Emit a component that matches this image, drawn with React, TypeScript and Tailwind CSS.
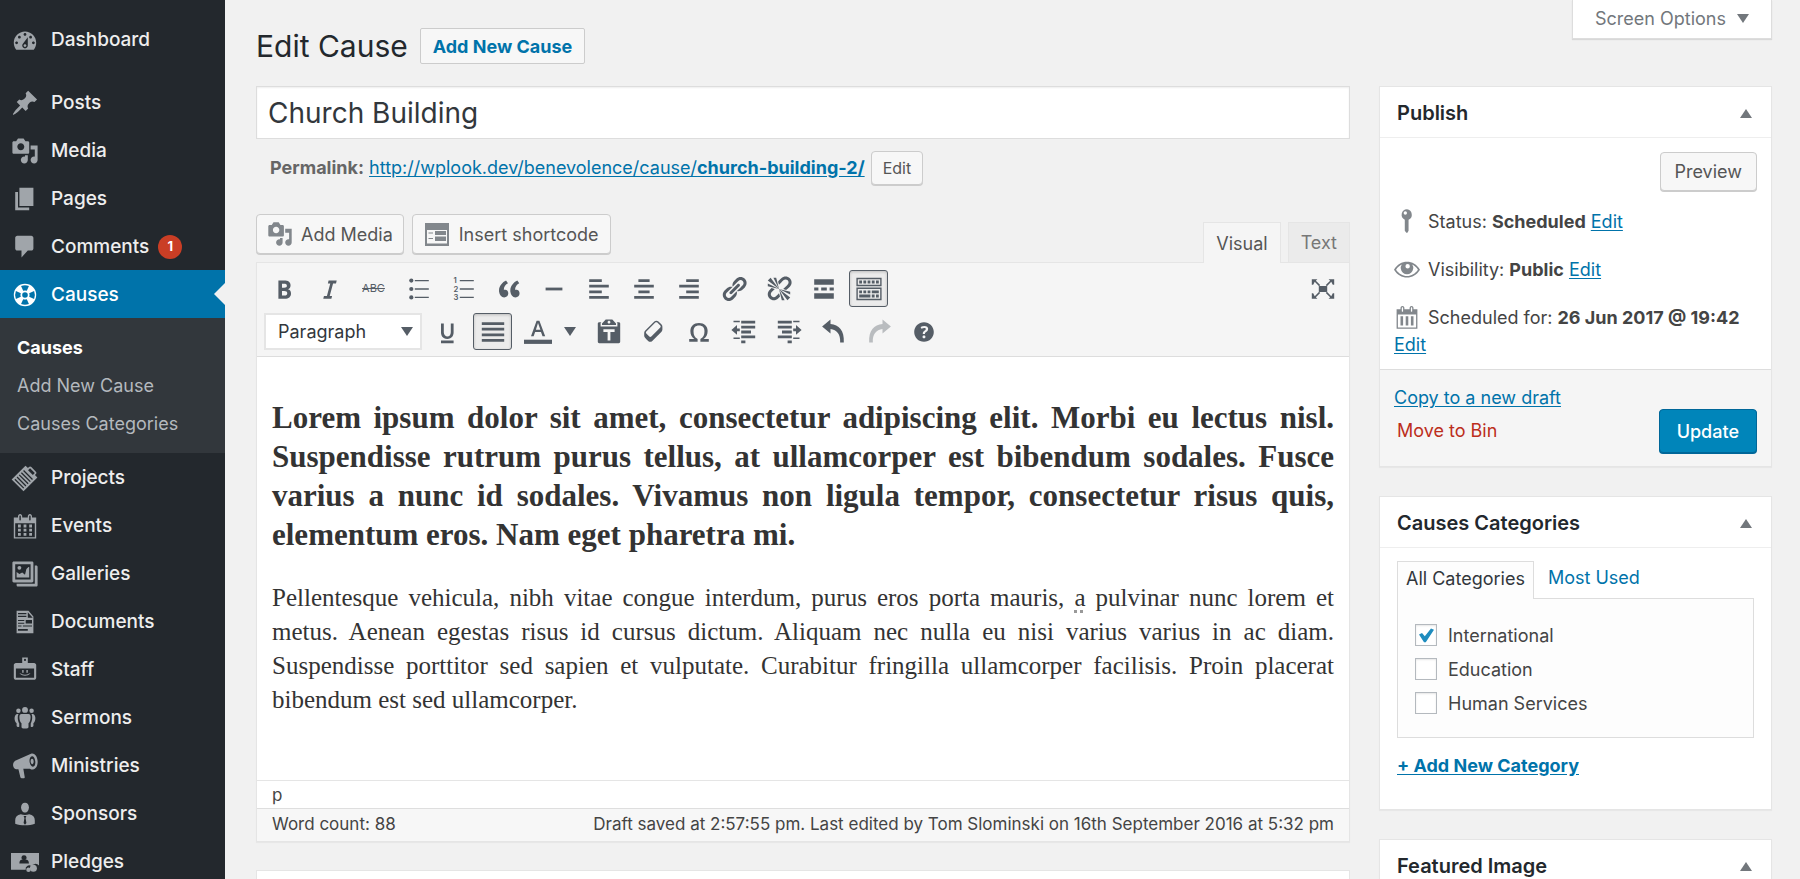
import React, { useState } from 'react';

type IconProps = { size?: string; children?: React.ReactNode; d?: string };

function Icon({ size = 'size-7', d, children }: IconProps) {
  return (
    <svg viewBox="0 0 20 20" className={`${size} shrink-0`} fill="currentColor" fillRule="evenodd" aria-hidden="true">
      {d ? <path d={d} /> : children}
    </svg>
  );
}

const MEDIA =
  'M13 11V4c0-.55-.45-1-1-1h-1.67L9 1H5L3.67 3H2c-.55 0-1 .45-1 1v7c0 .55.45 1 1 1h10c.55 0 1-.45 1-1zM7 4.5c1.38 0 2.5 1.12 2.5 2.5S8.38 9.5 7 9.5 4.5 8.38 4.5 7 5.62 4.5 7 4.5zM14 6h5v10.5c0 1.38-1.12 2.5-2.5 2.5S14 17.88 14 16.5s1.12-2.5 2.5-2.5c.17 0 .34.02.5.05V9h-3V6zm-4 8.05V13h2v3.5c0 1.38-1.12 2.5-2.5 2.5S7 17.88 7 16.5 8.12 14 9.5 14c.17 0 .34.02.5.05z';

const CAL_FRAME =
  'M15 4h3v15H2V4h3V3c0-.41.15-.76.44-1.06.29-.29.65-.44 1.06-.44s.77.15 1.06.44c.29.3.44.65.44 1.06v1h4V3c0-.41.15-.76.44-1.06.29-.29.65-.44 1.06-.44s.77.15 1.06.44c.29.3.44.65.44 1.06v1zM6 3v2.5c0 .14.05.26.15.36.09.09.21.14.35.14s.26-.05.35-.14c.1-.1.15-.22.15-.36V3c0-.14-.05-.26-.15-.35-.09-.1-.21-.15-.35-.15s-.26.05-.35.15c-.1.09-.15.21-.15.35zm7 0v2.5c0 .14.05.26.14.36.1.09.22.14.36.14s.26-.05.36-.14c.09-.1.14-.22.14-.36V3c0-.14-.05-.26-.14-.35-.1-.1-.22-.15-.36-.15s-.26.05-.36.15c-.09.09-.14.21-.14.35zm4 15V8H3v10h14z';

const icons = {
  dashboard: (
    <Icon d="M3.76 17h12.48c1.1-1.37 1.76-3.11 1.76-5 0-4.42-3.58-8-8-8s-8 3.58-8 8c0 1.89.66 3.63 1.76 5zM10 5c.55 0 1 .45 1 1s-.45 1-1 1-1-.45-1-1 .45-1 1-1zM6 7c.55 0 1 .45 1 1s-.45 1-1 1-1-.45-1-1 .45-1 1-1zm8 0c.55 0 1 .45 1 1s-.45 1-1 1-1-.45-1-1 .45-1 1-1zm-5.37 5.55L12 8v6c0 1.1-.9 2-2 2s-2-.9-2-2c0-.57.24-1.08.63-1.45zM4 11c.55 0 1 .45 1 1s-.45 1-1 1-1-.45-1-1 .45-1 1-1zm12 0c.55 0 1 .45 1 1s-.45 1-1 1-1-.45-1-1 .45-1 1-1zm-5 3c0-.55-.45-1-1-1s-1 .45-1 1 .45 1 1 1 1-.45 1-1z" />
  ),
  posts: (
    <Icon d="M10.44 3.02l1.82-1.82 6.36 6.35-1.83 1.82c-1.05-.68-2.48-.57-3.41.36l-.75.75c-.92.93-1.04 2.35-.35 3.41l-1.83 1.82-2.41-2.41-2.8 2.79c-.42.42-3.38 2.71-3.8 2.29s1.86-3.39 2.28-3.81l2.79-2.79L4.1 9.36l1.83-1.82c1.05.69 2.48.57 3.4-.36l.75-.75c.93-.92 1.05-2.35.36-3.41z" />
  ),
  media: <Icon d={MEDIA} />,
  pages: <Icon d="M6 15V2h10v13H6zm-1 1h8v2H3V5h2v11z" />,
  comments: <Icon d="M4.5 2h10c.8 0 1.500.7 1.500 1.500v7.500c0 .8-.7 1.500-1.500 1.500h-2.500l-4.500 5v-5H4.500c-.8 0-1.500-.7-1.500-1.500V3.500C3 2.700 3.700 2 4.500 2z" />,
  causes: (
    <Icon d="M10 2a8 8 0 1 0 0 16a8 8 0 1 0 0-16zM10 8a2 2 0 1 1 0 4a2 2 0 1 1 0-4zM7.200 3.500L8.700 7Q10 6.400 11.300 7L12.800 3.500Q10 2.400 7.200 3.500zM7.200 16.500L8.700 13Q10 13.600 11.300 13L12.800 16.500Q10 17.600 7.200 16.500zM3.500 7.200L7 8.700Q6.400 10 7 11.300L3.500 12.800Q2.400 10 3.500 7.200zM16.500 7.200L13 8.700Q13.600 10 13 11.300L16.500 12.800Q17.600 10 16.500 7.200z" />
  ),
  projects: (
    <Icon>
      <g transform="rotate(45 10 10)">
        <path d="M4 3.500h2.500V2.500c0-.8.500-1.200 1.200-1.200h4.600c.7 0 1.200.4 1.200 1.200v1H16v14H4zM7.600 2.500v2h4.800v-2zM5.500 6.500v.9h9v-.9zm0 2.200v.9h9v-.9zm0 2.200v.9h9v-.9zm0 2.200v.9h9v-.9zm0 2.200v.9h9v-.9z" />
      </g>
    </Icon>
  ),
  events: (
    <Icon d={CAL_FRAME + 'M5 9h2v2H5zM9 9h2v2H9zM13 9h2v2h-2zM5 12h2v2H5zM9 12h2v2H9zM13 12h2v2h-2zM5 15h2v2H5zM9 15h2v2H9zM13 15h2v2h-2z'} />
  ),
  galleries: (
    <Icon d="M2 1h13c.6 0 1 .4 1 1v13c0 .6-.4 1-1 1H2c-.6 0-1-.4-1-1V2c0-.6.4-1 1-1zm1 2v11h11V3zM6 4.200a1.400 1.400 0 1 1 0 2.800a1.400 1.400 0 1 1 0-2.800zM4 12.500V8.500l2 1.500 2-1 2 1.500 1-4 1.500-1.500.5 0v7.500zM17 4h1c.6 0 1 .4 1 1v13c0 .6-.4 1-1 1H5c-.6 0-1-.4-1-1v-1h13z" />
  ),
  documents: (
    <Icon d="M4 2h8.500L16 6v12H4zM5 3.600v.8h6v-.8zm0 2v.8h6v-.8zM12 3v4h3.500zM5 8.500v.8h4.500v-.8zm5.500 0v2.500H15V8.500zM5 10.500v.8h4.500v-.8zM5 12.500v.8h2.500v-.8zm3.500 0v.8H15v-.8zM5 15v1.200h7V15z" />
  ),
  staff: (
    <Icon d="M8 1h4v4h4.500c.8 0 1.500.7 1.500 1.500v9c0 .8-.7 1.500-1.500 1.500h-13C2.700 17 2 16.300 2 15.500v-9C2 5.700 2.700 5 3.500 5H8zM10 2a.8.8 0 1 0 0 1.600a.8.8 0 1 0 0-1.600zM3.500 9v6.500h13V9zM8 10h1v2H8zm3 0h1v2h-1zM6 12.500h1Q10 14.300 13 12.500h1Q10 15.800 6 12.500z" />
  ),
  sermons: (
    <Icon>
      <circle cx="10" cy="4.200" r="2.100" />
      <circle cx="5.300" cy="4.900" r="1.600" />
      <circle cx="14.700" cy="4.900" r="1.600" />
      <path d="M7.500 7.200h5c1 0 1.500.8 1.500 2 0 2-.5 3.600-1.500 4.600v2.600c0 .7-.8 1.100-2.500 1.100s-2.500-.4-2.500-1.100v-2.600C6.500 12.800 6 11.200 6 9.200c0-1.200.5-2 1.500-2z" />
      <path d="M4.300 7.200h1.100C4.600 8.500 4.600 11.500 5.900 14v2.200c-1 .6-1.600.2-1.900-.4v-2C2 12 2.100 8 4.300 7.200zM15.700 7.200h-1.100c.8 1.300.8 4.300-.5 6.800v2.200c1 .6 1.600.2 1.900-.4v-2c2-1.800 1.900-5.800-.3-6.600z" />
    </Icon>
  ),
  ministries: (
    <Icon d="M14.300 1.300c2.200-.8 4.400 1.500 4.700 5 .3 3.400-1.300 6-3.300 6.200-.8.100-1.500-.1-2.200-.6L8.800 12l1 5.800c.1.700-.2 1-.8 1H7.700c-.5 0-.8-.3-1-.8L5.300 12.300c-1.700.2-3.200-.3-3.700-2.200-.5-2.100.6-3.600 2.200-4.200zM15 3c-1.400.2-2 2-1.700 4.200.3 2 1.300 3.400 2.400 3.300 1.300-.2 1.900-2 1.600-4.100C17 4.300 16.100 2.900 15 3zM15 4.800c.8 0 1.200 1 1.200 2s-.4 1.900-1 1.900-1.100-.9-1.200-1.900c0-1.100.3-2 1-2z" />
  ),
  sponsors: (
    <Icon>
      <path d="M10 2c1.700 0 2.800 1.300 2.800 3.200C12.800 7.300 11.600 9 10 9S7.200 7.300 7.200 5.200C7.200 3.300 8.300 2 10 2z" />
      <path d="M7 10.200c1 .3 2 .5 3 .5s2-.2 3-.5c2.600.4 4 2 4 4.300v2.400c-2 .8-4.500 1.200-7 1.200s-5-.4-7-1.200v-2.400c0-2.300 1.400-3.900 4-4.300zM9 11.500l.6 1.300L9 16.500l1 1.200 1-1.200-.6-3.700.6-1.300z" />
    </Icon>
  ),
  pledges: (
    <Icon size="w-7 h-7 overflow-visible">
      <path d="M0 3.500h20v9a3.400 3.400 0 0 0-5.500.5a2.500 2.500 0 0 0-4 2.500H0zM9.300 5.300a1.600 1.600 0 0 0-1 3c-1.600.2-2.300 1-2.300 2.700h6.800c0-1.700-.8-2.500-2.500-2.700a1.600 1.600 0 0 0-1-3z" />
      <circle cx="16" cy="14.500" r="2.500" />
      <circle cx="12.500" cy="15.500" r="1.600" />
    </Icon>
  ),
};

const menuTop = [
  { label: 'Posts', icon: icons.posts },
  { label: 'Media', icon: icons.media },
  { label: 'Pages', icon: icons.pages },
  { label: 'Comments', icon: icons.comments, badge: '1' },
];

const menuBottom = [
  { label: 'Projects', icon: icons.projects },
  { label: 'Events', icon: icons.events },
  { label: 'Galleries', icon: icons.galleries },
  { label: 'Documents', icon: icons.documents },
  { label: 'Staff', icon: icons.staff },
  { label: 'Sermons', icon: icons.sermons },
  { label: 'Ministries', icon: icons.ministries },
  { label: 'Sponsors', icon: icons.sponsors },
  { label: 'Pledges', icon: icons.pledges },
];

function MenuItem({ label, icon, badge }: { label: string; icon: React.ReactNode; badge?: string }) {
  return (
    <li>
      <a href="#" className="flex h-12 items-center gap-3 pt-0.5 pl-[11px] text-[19px] font-medium text-[#eeeeee]">
        <span className="text-[#a0a5aa]">{icon}</span>
        <span className="flex items-center gap-[9px]">
          {label}
          {badge && (
            <span className="flex size-6 items-center justify-center rounded-full bg-[#ca3e25] text-[13px] font-bold text-white">{badge}</span>
          )}
        </span>
      </a>
    </li>
  );
}

function Sidebar() {
  return (
    <nav className="w-[225px] shrink-0 bg-[#23282d] pt-[15px]" aria-label="Main menu">
      <ul>
        <MenuItem label="Dashboard" icon={icons.dashboard} />
      </ul>
      <ul className="mt-[15px]">
        {menuTop.map((m) => (
          <MenuItem key={m.label} {...m} />
        ))}
        <li>
          <a href="#" className="relative flex h-12 items-center gap-3 bg-[#0073aa] pt-0.5 pl-[11px] text-[19px] font-medium text-white">
            {icons.causes}
            Causes
            <span className="absolute top-1/2 right-0 -mt-[11px] border-y-[11px] border-r-[11px] border-y-transparent border-r-[#f1f1f1]" />
          </a>
          <ul className="bg-[#32373c] px-[17px] pt-[10px] pb-[11px] text-[18px]">
            <li><a href="#" className="flex h-[38px] items-center font-bold text-white">Causes</a></li>
            <li><a href="#" className="flex h-[38px] items-center text-[#b4b9be]">Add New Cause</a></li>
            <li><a href="#" className="flex h-[38px] items-center text-[#b4b9be]">Causes Categories</a></li>
          </ul>
        </li>
        {menuBottom.map((m) => (
          <MenuItem key={m.label} {...m} />
        ))}
      </ul>
    </nav>
  );
}

function ToolButton({ label, active, faded, children }: { label: string; active?: boolean; faded?: boolean; children: React.ReactNode }) {
  return (
    <button
      type="button"
      aria-label={label}
      className={`flex h-[37px] w-[39px] shrink-0 items-center justify-center rounded-[3px] border ${
        active ? 'border-[#555d66] bg-[#ebebeb] shadow-[inset_0_1px_3px_rgba(0,0,0,0.2)]' : 'border-transparent'
      } ${faded ? 'text-[#b9bcbf]' : 'text-[#555d66]'}`}
    >
      {children}
    </button>
  );
}

const INDENT_LINES = 'M8 2h10v2H8zM8 5.500h10v2H8zM8 9h7v2H8zM8 12.500h10v2H8zM8 16h3v2H8zM2.500 2H7v1H2.500zM2.500 14H7v1H2.500z';

function Toolbar() {
  return (
    <div className="border-b border-[#dddddd] bg-[#f5f5f5] px-[7px] pt-[7px] pb-[6px]">
      <div className="flex items-center justify-between">
        <div className="flex gap-[6px]">
          <ToolButton label="Bold">
            <Icon d="M6 4v13h4.540c1.370 0 2.460-.33 3.260-1 .8-.66 1.200-1.580 1.200-2.770 0-.84-.17-1.510-.51-2.010s-.9-.85-1.670-1.030v-.09c.57-.1 1.020-.4 1.360-.9s.51-1.130.51-1.910c0-1.140-.39-1.980-1.170-2.500C12.750 4.260 11.500 4 9.780 4H6zm2.570 5.150V6.260h1.360c.73 0 1.270.11 1.610.32.34.22.51.58.51 1.070 0 .54-.16.92-.47 1.150s-.82.35-1.510.35h-1.500zm0 2.190h1.600c1.440 0 2.160.53 2.160 1.610 0 .6-.17 1.050-.51 1.340s-.86.43-1.570.43H8.570v-3.380z" />
          </ToolButton>
          <ToolButton label="Italic"><Icon d="M15.500 4h-5.800l-.5 2h1.700l-2.400 9H6.400L5.900 17h5.800l.5-2h-1.700l2.400-9H15z" /></ToolButton>
          <ToolButton label="Strikethrough"><span className="text-[11px] line-through">ABC</span></ToolButton>
          <ToolButton label="Bulleted list">
            <Icon>
              <circle cx="4.500" cy="4" r="1.500" /><circle cx="4.500" cy="10" r="1.500" /><circle cx="4.500" cy="16" r="1.500" />
              <path d="M7 3.500h10v1H7zM7 9.500h10v1H7zM7 15.500h10v1H7z" />
            </Icon>
          </ToolButton>
          <ToolButton label="Numbered list">
            <Icon>
              <text x="2.500" y="6" fontSize="5.500" fontWeight="600">1</text>
              <text x="2.500" y="12" fontSize="5.500" fontWeight="600">2</text>
              <text x="2.500" y="18" fontSize="5.500" fontWeight="600">3</text>
              <path d="M7 3.500h10v1H7zM7 9.500h10v1H7zM7 15.500h10v1H7z" />
            </Icon>
          </ToolButton>
          <ToolButton label="Blockquote">
            <Icon d="M9.490 13.220c0-.74-.2-1.380-.61-1.900-.62-.78-1.830-.88-2.530-.72-.29-1.650 1.110-3.750 2.920-4.650L7.880 4c-2.730 1.300-5.420 4.280-4.960 8.050C3.210 14.430 4.590 16 6.540 16c.85 0 1.560-.25 2.120-.75s.83-1.180.83-2.030zm8.050 0c0-.74-.2-1.380-.61-1.900-.63-.78-1.830-.88-2.530-.72-.29-1.650 1.110-3.750 2.920-4.650L15.930 4c-2.730 1.300-5.410 4.280-4.950 8.050.29 2.380 1.660 3.950 3.610 3.950.85 0 1.560-.25 2.120-.75s.83-1.180.83-2.030z" />
          </ToolButton>
          <ToolButton label="Horizontal line"><Icon d="M4 9h12v2H4z" /></ToolButton>
          <ToolButton label="Align left"><Icon d="M12 5V3H3v2h9zm5 4V7H3v2h14zm-5 4v-2H3v2h9zm5 4v-2H3v2h14z" /></ToolButton>
          <ToolButton label="Align center"><Icon d="M14 5V3H6v2h8zm3 4V7H3v2h14zm-3 4v-2H6v2h8zm3 4v-2H3v2h14z" /></ToolButton>
          <ToolButton label="Align right"><Icon d="M17 5V3H8v2h9zm0 4V7H3v2h14zm0 4v-2H8v2h9zm0 4v-2H3v2h14z" /></ToolButton>
          <ToolButton label="Insert link">
            <Icon d="M17.740 2.760c1.680 1.690 1.680 4.410 0 6.100l-1.530 1.520c-1.120 1.120-2.700 1.470-4.140 1.090l2.620-2.610.76-.77.76-.76c.84-.84.84-2.200 0-3.040-.84-.85-2.200-.85-3.040 0l-.77.76-3.380 3.380c-.37-1.440-.02-3.020 1.100-4.140l1.520-1.530c1.690-1.680 4.420-1.680 6.100 0zM8.590 13.430l5.340-5.340c.42-.42.42-1.100 0-1.520-.44-.43-1.130-.39-1.530 0l-5.330 5.340c-.42.42-.42 1.100 0 1.520.44.43 1.130.39 1.520 0zm-.76 2.290l4.140-4.150c.38 1.440.03 3.020-1.090 4.140l-1.520 1.530c-1.690 1.680-4.410 1.680-6.100 0-1.680-1.680-1.680-4.420 0-6.100l1.530-1.520c1.120-1.120 2.700-1.470 4.140-1.100l-4.140 4.150c-.85.84-.85 2.200 0 3.050.84.84 2.200.84 3.040 0z" />
          </ToolButton>
          <ToolButton label="Remove link">
            <Icon d="M17.740 2.260c1.680 1.690 1.680 4.410 0 6.100l-1.530 1.520c-.32.33-.69.58-1.080.77L13 10l1.690-1.640.76-.77.76-.76c.84-.84.84-2.200 0-3.040-.84-.85-2.200-.85-3.040 0l-.77.76-.76.76L10 7l-.65-2.140c.19-.38.44-.75.77-1.070l1.520-1.530c1.690-1.680 4.420-1.680 6.100 0zM2 4l8 6-6-8zm4-2l4 8-2-8H6zM2 6l8 4-8-2V6zm7.360 7.690L10 13l.74 2.350-1.380 1.390c-1.690 1.680-4.410 1.680-6.100 0-1.680-1.680-1.680-4.420 0-6.100l1.390-1.380L7 10l-.69.64-1.520 1.530c-.85.84-.85 2.200 0 3.040.84.85 2.200.85 3.040 0zM18 16l-8-6 6 8zm-4 2l-4-8 2 8h2zm4-4l-8-4 8 2v2z" />
          </ToolButton>
          <ToolButton label="Read more tag"><Icon d="M17 7V3H3v4h14zM6 11V9H3v2h3zm6 0V9H8v2h4zm5 0V9h-3v2h3zm0 6v-4H3v4h14z" /></ToolButton>
          <ToolButton label="Toolbar toggle" active>
            <Icon d="M19 2v6H1V2h18zm-1 5V3H2v4h16zM5 4v2H3V4h2zm3 0v2H6V4h2zm3 0v2H9V4h2zm3 0v2h-2V4h2zm3 0v2h-2V4h2zm2 5v9H1V9h18zm-1 8v-7H2v7h16zM5 11v2H3v-2h2zm3 0v2H6v-2h2zm3 0v2H9v-2h2zm6 0v2h-5v-2h5zm-6 3v2H3v-2h8zm3 0v2h-2v-2h2zm3 0v2h-2v-2h2z" />
          </ToolButton>
        </div>
        <ToolButton label="Distraction-free writing mode">
          <Icon>
            <path d="M7 7.800h6v4.400H7zM2 3h4L4.900 4.100 8 7.200 7.200 8 4.100 4.900 3 7 2 7zM18 3h-4l1.100 1.100L12 7.200l.8.8 3.100-3.100L17 7h1zM2 17h4l-1.100-1.100L8 12.800 7.200 12l-3.100 3.100L3 13H2zM18 17h-4l1.100-1.100L12 12.800l.8-.8 3.100 3.100L17 13h1z" />
          </Icon>
        </ToolButton>
      </div>
      <div className="mt-[6px] flex items-center gap-[6px]">
        <button type="button" className="flex h-[37px] w-[158px] shrink-0 items-center justify-between border-2 border-[#e5e5e5] bg-white pr-[7px] pl-[12px] text-[18px] text-[#32373c]">
          Paragraph
          <svg viewBox="0 0 12 9" className="h-[9px] w-3" fill="#555d66"><path d="M0 0h12L6 9z" /></svg>
        </button>
        <ToolButton label="Underline">
          <Icon d="M14 4h-2v6.200c0 1.990-1.120 2.980-2.450 2.980-1.320 0-2.550-1-2.550-2.960V4H5v6.400c0 1.910 1 4.540 4.480 4.540 3.490 0 4.520-2.580 4.520-4.500V4zM14 18v-2H5v2z" />
        </ToolButton>
        <ToolButton label="Justify" active><Icon d="M2 3h16v2H2V3zm0 4h16v2H2V7zm0 4h16v2H2v-2zm0 4h16v2H2v-2z" /></ToolButton>
        <div className="flex">
          <ToolButton label="Text color">
            <Icon>
              <path d="M13.230 13h1.900L11 2H9L5 13h1.880l1.070-3h4.180zm-1.530-4.540H8.510L10 3.600z" />
              <path d="M0 15.500h20v3H0z" />
            </Icon>
          </ToolButton>
          <button type="button" aria-label="Text color options" className="flex w-[26px] items-center justify-center">
            <svg viewBox="0 0 12 9" className="h-[9px] w-3" fill="#555d66"><path d="M0 0h12L6 9z" /></svg>
          </button>
        </div>
        <ToolButton label="Paste as text">
          <Icon d="M12.380 1L15 4v1H5V4l2.640-3h4.740zM10 4c.55 0 1-.44 1-1 0-.55-.45-1-1-1s-1 .45-1 1c0 .56.45 1 1 1zm5.450-1H17c.55 0 1 .45 1 1v13c0 .56-.45 1-1 1H3c-.55 0-1-.44-1-1V4c0-.55.45-1 1-1h1.550L4 3.630V6h12V3.630zM14 10V8H6v2h3v6h2v-6h3z" />
        </ToolButton>
        <ToolButton label="Clear formatting">
          <Icon d="M14.290 3.590l1.100 1.110c.41.4.61.94.61 1.470v2.120c0 .53-.2 1.070-.61 1.470l-6.630 6.630c-.4.41-.94.61-1.470.61s-1.070-.2-1.470-.61l-1.110-1.100-1.100-1.110c-.41-.4-.61-.94-.61-1.470v-2.120c0-.54.2-1.070.61-1.480l6.630-6.620c.4-.41.94-.61 1.470-.61s1.060.2 1.470.61zm-6.210 9.700l6.420-6.420c.39-.39.39-1.030 0-1.430L12.360 3.300c-.19-.19-.45-.29-.72-.29s-.52.1-.71.29l-6.420 6.420c-.39.4-.39 1.040 0 1.430l2.140 2.140c.38.38 1.040.38 1.430 0z" />
        </ToolButton>
        <ToolButton label="Special character">
          <Icon d="M10 5.400c1.270 0 2.240.36 2.910 1.080.66.71 1 1.760 1 3.130 0 1.280-.23 2.370-.69 3.270-.47.89-1.270 1.520-2.220 2.120v2h6v-2h-3.690c.92-.64 1.620-1.340 2.120-2.340.49-1.010.74-2.130.74-3.350 0-1.780-.55-3.190-1.650-4.220S11.920 3.540 10 3.540s-3.430.53-4.520 1.570c-1.100 1.040-1.650 2.440-1.650 4.200 0 1.210.24 2.310.73 3.330.48 1.010 1.190 1.710 2.100 2.360H3v2h6v-2c-.98-.64-1.800-1.280-2.240-2.170-.45-.89-.67-1.960-.67-3.220 0-1.370.33-2.410 1-3.130C7.750 5.760 8.720 5.400 10 5.400z" />
        </ToolButton>
        <ToolButton label="Decrease indent"><Icon d={INDENT_LINES + 'M1 8.500L5 5v2.500h2v2H5V12z'} /></ToolButton>
        <ToolButton label="Increase indent">
          <Icon>
            <path transform="matrix(-1 0 0 1 20 0)" d={INDENT_LINES + 'M1 8.500L5 5v2.500h2v2H5V12z'} />
          </Icon>
        </ToolButton>
        <ToolButton label="Undo"><Icon d="M1.500 6L7.500 1v3.300c6 .4 10 4.500 9.500 13.200h-2.600C14.800 11.500 12 8.300 7.500 7.800V11z" /></ToolButton>
        <ToolButton label="Redo" faded><Icon d="M18.500 6L12.500 1v3.300c-6 .4-10 4.500-9.500 13.200h2.600C5.200 11.500 8 8.300 12.500 7.800V11z" /></ToolButton>
        <ToolButton label="Keyboard shortcuts">
          <Icon d="M17 10c0-3.870-3.140-7-7-7-3.870 0-7 3.130-7 7s3.130 7 7 7c3.860 0 7-3.130 7-7zm-6.300 1.480H9.140v-.43c0-.38.08-.7.24-.98s.46-.57.88-.89c.41-.29.68-.53.81-.71.14-.18.2-.39.2-.62 0-.25-.09-.44-.28-.58-.19-.13-.45-.19-.79-.19-.58 0-1.250.19-2 .57l-.64-1.280c.87-.49 1.800-.74 2.770-.74.81 0 1.450.2 1.920.58.48.39.71.91.71 1.550 0 .43-.09.8-.29 1.110-.19.32-.57.67-1.110 1.060-.38.28-.61.49-.71.63-.1.150-.15.34-.15.57v.35zm-1.470 2.740c-.18-.17-.27-.42-.27-.73 0-.33.08-.58.26-.75s.43-.25.77-.25c.32 0 .57.09.75.26s.27.42.27.74c0 .3-.09.55-.27.72-.18.18-.43.27-.75.27-.33 0-.58-.09-.76-.26z" />
        </ToolButton>
      </div>
    </div>
  );
}

const grayButton =
  'flex items-center rounded-[4px] border border-[#cccccc] bg-[#f7f7f7] text-[#555555] shadow-[0_1px_0_#cccccc]';
const link = 'text-[#0073aa] underline underline-offset-2';

function Editor() {
  return (
    <section>
      <div className="mt-[28px] flex items-end justify-between">
        <div className="mb-2 flex gap-2">
          <button type="button" className={`${grayButton} h-10 gap-2 px-[10px] text-[18px]`}>
            <span className="text-[#82878c]"><Icon size="size-[26px]" d={MEDIA} /></span>
            Add Media
          </button>
          <button type="button" className={`${grayButton} h-10 gap-[9px] px-[11px] text-[18px]`}>
            <svg viewBox="0 0 26 24" className="h-6 w-[26px]" fill="#82878c" fillRule="evenodd" aria-hidden="true">
              <path d="M1 1h24v23H1zM3 8v13.500h20V8zM4.500 10.500H9v1H4.500zm6.500-1.500h11v4H11zM4.500 16H9v1H4.500zM11 14.500h11v4.500H11z" />
            </svg>
            Insert shortcode
          </button>
        </div>
        <div className="flex gap-[7px]">
          <button type="button" className="relative -mb-px h-[41px] border border-b-0 border-[#e5e5e5] bg-[#f5f5f5] px-3 text-[18px] text-[#555555]">Visual</button>
          <button type="button" className="h-10 border border-b-0 border-[#e5e5e5] bg-[#ebebeb] px-3 text-[18px] text-[#777777]">Text</button>
        </div>
      </div>
      <div className="border border-[#e5e5e5] bg-white shadow-[0_1px_1px_rgba(0,0,0,0.04)]">
        <Toolbar />
        <article className="h-[423px] px-[15px] pt-[41px] text-justify font-['Liberation_Serif',serif] text-[#333333]">
          <h2 className="text-[31px] leading-[39px] font-bold">
            Lorem ipsum dolor sit amet, consectetur adipiscing elit. Morbi eu lectus nisl. Suspendisse rutrum purus tellus, at ullamcorper est bibendum sodales. Fusce varius a nunc id sodales. Vivamus non ligula tempor, consectetur risus quis, elementum eros. Nam eget pharetra mi.
          </h2>
          <p className="mt-[27px] text-[25px] leading-[34px]">
            Pellentesque vehicula, nibh vitae congue interdum, purus eros porta mauris, <span className="underline decoration-[#999999] decoration-dotted decoration-3 underline-offset-4">a</span> pulvinar nunc lorem et metus. Aenean egestas risus id cursus dictum. Aliquam nec nulla eu nisi varius varius in ac diam. Suspendisse porttitor sed sapien et vulputate. Curabitur fringilla ullamcorper facilisis. Proin placerat bibendum est sed ullamcorper.
          </p>
        </article>
        <div className="h-7 border-t border-[#e5e5e5] px-[15px] text-[17px] leading-7 text-[#444444]">p</div>
        <div className="flex h-[33px] items-center justify-between border-t border-[#dedede] bg-[#f7f7f7] px-[15px] text-[17px] text-[#444444]">
          <span>Word count: 88</span>
          <span>Draft saved at 2:57:55 pm. Last edited by Tom Slominski on 16th September 2016 at 5:32 pm</span>
        </div>
      </div>
    </section>
  );
}

function Box({ title, children }: { title: string; children?: React.ReactNode }) {
  return (
    <section className="border border-[#e5e5e5] bg-white shadow-[0_1px_1px_rgba(0,0,0,0.04)]">
      <header className="flex h-[51px] items-center justify-between border-b border-[#eeeeee] pt-0.5 pr-[19px] pl-[17px]">
        <h2 className="text-[20px] font-semibold text-[#23282d]">{title}</h2>
        <button type="button" aria-label={`Toggle panel: ${title}`}>
          <svg viewBox="0 0 12 9" className="h-[9px] w-3" fill="#72777c"><path d="M0 9h12L6 0z" /></svg>
        </button>
      </header>
      {children}
    </section>
  );
}

function PublishBox() {
  return (
    <Box title="Publish">
      <div className="px-[14px] pt-[14px] pb-[10px] text-[18px] text-[#444444]">
        <div className="flex justify-end">
          <button type="button" className={`${grayButton} h-[39px] px-[14px]`}>Preview</button>
        </div>
        <div className="mt-4 flex h-7 items-center">
          <span className="mr-2 text-[#82878c]">
            <Icon size="size-[26px]">
              <path d="M10 1a4.200 4.200 0 0 0-1.700 8v8.500l1.200 1.500h.8l.9-1.500V9A4.200 4.200 0 0 0 10 1zM8.700 2.500a1.300 1.300 0 1 1 0 2.600a1.300 1.300 0 1 1 0-2.600z" />
            </Icon>
          </span>
          <span>Status: <b className="font-bold">Scheduled</b> <a href="#" className={link}>Edit</a></span>
        </div>
        <div className="mt-5 flex h-7 items-center">
          <span className="mr-2 text-[#82878c]">
            <Icon size="size-[26px]">
              <path d="M0 10.500C2.500 6.500 6 4.500 10 4.500s7.500 2 10 6c-2.500 4-6 6-10 6s-7.500-2-10-6zm1.600 0c2 3 5 4.800 8.400 4.800s6.400-1.800 8.400-4.800c-1-1.700-2.600-3-4.400-3.900a4.800 4.800 0 1 1-8 0c-1.800.9-3.400 2.200-4.400 3.900zM10.500 6.200a1.700 1.700 0 1 0 0 3.400a1.700 1.700 0 1 0 0-3.400z" />
            </Icon>
          </span>
          <span>Visibility: <b className="font-bold">Public</b> <a href="#" className={link}>Edit</a></span>
        </div>
        <div className="mt-5 flex h-7 items-center whitespace-nowrap">
          <span className="mr-2 text-[#82878c]">
            <Icon size="size-[26px]" d={CAL_FRAME + 'M5 9.500h2v7H5zM9 9.500h2v7H9zM13 9.500h2v7h-2z'} />
          </span>
          <span>Scheduled for: <b className="font-bold">26 Jun 2017 @ 19:42</b></span>
        </div>
        <a href="#" className={`${link} leading-7`}>Edit</a>
      </div>
      <footer className="flex justify-between border-t border-[#dddddd] bg-[#f5f5f5] px-[14px] pt-3 pb-[13px] text-[18px]">
        <div className="flex flex-col gap-[5px] pt-[2px]">
          <a href="#" className={`${link} leading-7`}>Copy to a new draft</a>
          <a href="#" className="pl-[3px] leading-7 text-[#bc2e1c]">Move to Bin</a>
        </div>
        <button type="button" className="mt-[27px] h-[44px] rounded-[4px] border border-[#006799] bg-[#0085ba] px-[17px] font-medium text-white shadow-[0_1px_0_#006799]">Update</button>
      </footer>
    </Box>
  );
}

function CategoriesBox() {
  const [checked, setChecked] = useState<Record<string, boolean>>({ International: true });
  return (
    <Box title="Causes Categories">
      <div className="px-[17px] pt-[13px] pb-[29px] text-[18px] text-[#444444]">
        <div className="flex">
          <button type="button" className="relative -mb-px h-[38px] border border-b-0 border-[#dddddd] bg-[#fdfdfd] px-2 pb-1 text-[#32373c]">All Categories</button>
          <button type="button" className="px-[14px] pb-1 text-[#0073aa]">Most Used</button>
        </div>
        <div className="flex h-[140px] flex-col gap-3 border border-[#dddddd] bg-[#fdfdfd] px-[17px] pt-[25px]">
          {['International', 'Education', 'Human Services'].map((c) => (
            <label key={c} className="flex h-[22px] items-center gap-[11px]">
              <span className="relative flex size-[22px]">
                <input
                  type="checkbox"
                  checked={!!checked[c]}
                  onChange={() => setChecked({ ...checked, [c]: !checked[c] })}
                  className="size-[22px] appearance-none border border-[#b4b9be] bg-white shadow-[inset_0_1px_2px_rgba(0,0,0,0.1)]"
                />
                {checked[c] && (
                  <svg viewBox="0 0 22 22" className="pointer-events-none absolute inset-0" fill="#1e8cbe" aria-hidden="true">
                    <path d="M4 10.500l3-1.500 2.800 3.200L16 4.500l3 1.200-8.200 12.500H9z" />
                  </svg>
                )}
              </span>
              {c}
            </label>
          ))}
        </div>
        <a href="#" className={`${link} mt-[14px] block leading-7 font-bold`}>+ Add New Category</a>
      </div>
    </Box>
  );
}

export default function App() {
  return (
    <div className="flex h-screen overflow-hidden bg-[#f1f1f1] font-[Inter,sans-serif] text-[#444444]">
      <Sidebar />
      <div className="flex min-w-0 flex-1 gap-[29px] pr-[28px] pl-[31px]">
        <main className="min-w-0 flex-1 pt-[27px]">
          <div className="flex items-center gap-3">
            <h1 className="text-[30px] leading-[38px] text-[#23282d]">Edit Cause</h1>
            <a href="#" className="flex h-9 items-center rounded-[2px] border border-[#cccccc] bg-[#f7f7f7] px-3 text-[18px] font-bold text-[#0073aa]">Add New Cause</a>
          </div>
          <input
            aria-label="Title"
            defaultValue="Church Building"
            className="mt-[21px] block h-[53px] w-full border border-[#dddddd] bg-white px-[11px] text-[28px] text-[#32373c] shadow-[inset_0_1px_2px_rgba(0,0,0,0.07)] outline-none"
          />
          <div className="mt-[11px] flex h-[35px] items-center gap-[6px] pl-[14px] text-[18px]">
            <span>
              <b className="font-bold text-[#666666]">Permalink:</b>{' '}
              <a href="#" className={link}>http://wplook.dev/benevolence/cause/<b className="font-bold">church-building-2/</b></a>
            </span>
            <button type="button" className={`${grayButton} h-[34px] px-[11px] text-[16px]`}>Edit</button>
          </div>
          <div className="pt-px">
            <Editor />
          </div>
          <section className="mt-[28px] h-20 border border-[#e5e5e5] bg-white" />
        </main>
        <aside className="w-[393px] shrink-0">
          <div className="flex justify-end">
            <button type="button" className="flex h-[39px] items-center gap-[11px] border border-t-0 border-[#dddddd] bg-white px-[22px] pb-0.5 text-[18px] text-[#72777c] shadow-[0_1px_1px_rgba(0,0,0,0.1)]">
              Screen Options
              <svg viewBox="0 0 12 9" className="h-[9px] w-3" fill="#72777c"><path d="M0 0h12L6 9z" /></svg>
            </button>
          </div>
          <div className="mt-[47px] flex flex-col gap-[29px]">
            <PublishBox />
            <CategoriesBox />
            <Box title="Featured Image" />
          </div>
        </aside>
      </div>
    </div>
  );
}
